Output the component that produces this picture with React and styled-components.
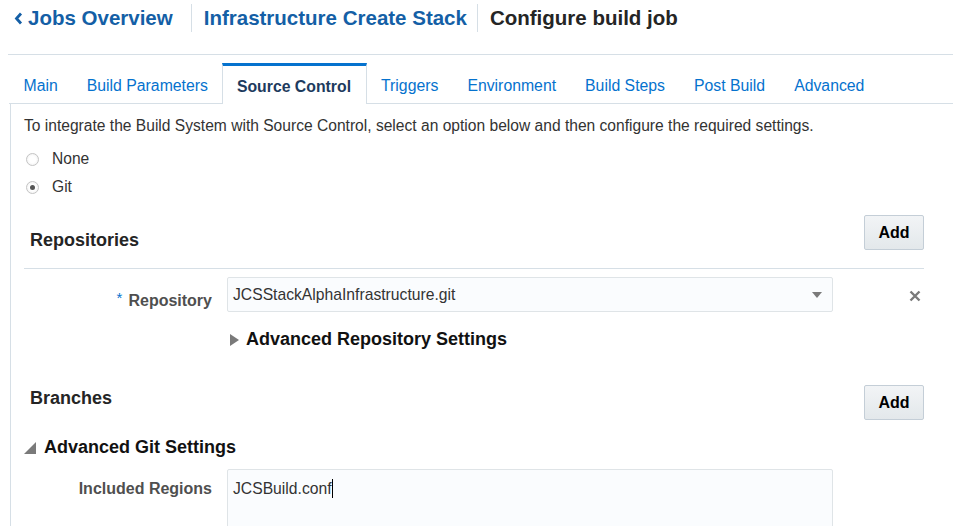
import React from 'react';
import styled, { createGlobalStyle } from 'styled-components';

const GlobalStyle = createGlobalStyle`
  html, body {
    margin: 0;
    padding: 0;
    background: #ffffff;
    font-family: "Liberation Sans", Arial, sans-serif;
    overflow: hidden;
  }
`;

const Page = styled.div`
  width: 953px;
  height: 526px;
  overflow: hidden;
`;

const Header = styled.header`
  margin-left: 8px;
  height: 36px;
  padding: 0 0 18px 6px;
  border-bottom: 1px solid #d6dfe6;
  display: flex;
  align-items: center;
`;

const Crumb = styled.a`
  display: flex;
  align-items: center;
  gap: 5px;
  font-size: 20.5px;
  font-weight: bold;
  color: ${p => (p.current ? '#252525' : '#145fa6')};
  text-decoration: none;
  height: 28px;
  padding: 0 ${p => (p.first ? '18px' : '10px')} 0 ${p => (p.first ? '0' : '12px')};
  border-left: ${p => (p.first ? 'none' : '1px solid #d6dfe6')};
`;

const TabBar = styled.nav`
  margin: 8px 0 0 9px;
  height: 40px;
  display: flex;
  border-bottom: 1px solid #d6dfe6;
`;

const Tab = styled.a`
  display: flex;
  align-items: center;
  padding: ${p => (p.active ? '3px 14.5px 0 13.5px' : '6px 14.5px 0')};
  font-size: 15.8px;
  color: ${p => (p.active ? '#1d3b5e' : '#0572ce')};
  font-weight: ${p => (p.active ? 'bold' : 'normal')};
  background: #ffffff;
  border-top: ${p => (p.active ? '3px solid #0572ce' : 'none')};
  border-left: ${p => (p.active ? '1px solid #d6dfe6' : 'none')};
  border-right: ${p => (p.active ? '1px solid #d6dfe6' : 'none')};
  margin-bottom: ${p => (p.active ? '-1px' : '0')};
  text-decoration: none;
`;

const Panel = styled.main`
  margin-left: 10px;
  border-left: 1px solid #d6dfe6;
  padding: 12px 29px 0 13px;
  height: 420px;
`;

const Intro = styled.p`
  margin: 0;
  font-size: 15.6px;
  line-height: 20px;
  color: #333333;
`;

const RadioList = styled.div`
  display: flex;
  flex-direction: column;
  margin-top: 9px;
`;

const RadioRow = styled.label`
  display: flex;
  align-items: center;
  height: 28px;
  font-size: 15.6px;
  color: #333333;
`;

const RadioCircle = styled.span`
  width: 11px;
  height: 11px;
  margin: 0 13px 0 2px;
  border-radius: 50%;
  border: 1px solid #c4c4c4;
  background: radial-gradient(circle, #ffffff 40%, #ececec 100%);
  display: flex;
  align-items: center;
  justify-content: center;
  &::after {
    content: '';
    width: 5px;
    height: 5px;
    border-radius: 50%;
    background: ${p => (p.checked ? '#555555' : 'transparent')};
  }
`;

const SectionHead = styled.div`
  display: flex;
  align-items: flex-start;
  justify-content: space-between;
  margin-top: ${p => p.top}px;
  padding-bottom: ${p => p.pad}px;
  border-bottom: ${p => (p.divider ? '1px solid #d6dfe6' : 'none')};
`;

const SectionTitle = styled.h2`
  margin: ${p => p.offset}px 0 0 6px;
  font-size: 18px;
  font-weight: bold;
  color: #252525;
  line-height: 20px;
`;

const AddButton = styled.button`
  width: 60px;
  height: 35px;
  border: 1px solid #c4ced7;
  border-radius: 2px;
  background: linear-gradient(#f2f4f6, #e3e8eb);
  font-family: "Liberation Sans", Arial, sans-serif;
  font-size: 16px;
  font-weight: bold;
  color: #000000;
  padding: 0;
`;

const FormRow = styled.div`
  display: flex;
  align-items: flex-start;
  margin-top: ${p => p.mt}px;
`;

const Label = styled.label`
  width: 203px;
  padding-right: 15px;
  box-sizing: border-box;
  text-align: right;
  font-size: 16px;
  line-height: 20px;
  font-weight: bold;
  color: #4f4f4f;
  padding-top: ${p => p.offset}px;
`;

const Required = styled.span`
  color: #0572ce;
  font-size: 15px;
  vertical-align: top;
  position: relative;
  top: -3px;
  margin-right: 6px;
  font-weight: normal;
`;

const Field = styled.div`
  width: 606px;
  height: ${p => p.h}px;
  box-sizing: border-box;
  border: 1px solid #dfe4e7;
  border-radius: 2px;
  background: #fafcfe;
  display: flex;
  align-items: ${p => (p.multi ? 'flex-start' : 'center')};
  justify-content: space-between;
  padding: ${p => (p.multi ? '10px 10px 0 5px' : '0 10px 0 5px')};
  font-size: 15.7px;
  color: #333333;
`;

const Caret = styled.span`
  display: inline-block;
  width: 1px;
  height: 19px;
  background: #000;
  vertical-align: middle;
  margin-top: -3px;
`;

const Remove = styled.button`
  margin: 13px 3px 0 auto;
  border: none;
  background: none;
  padding: 0;
  display: flex;
`;

const Disclosure = styled.div`
  display: flex;
  align-items: center;
  gap: ${p => p.gap}px;
  margin: ${p => p.margin};
  font-size: 18px;
  font-weight: bold;
  color: #111111;
`;

const ChevronLeft = () => (
  <svg width="9" height="13" viewBox="0 0 9 13">
    <polyline points="7,1.5 2.5,6.5 7,11.5" fill="none" stroke="#145fa6" strokeWidth="2.8" />
  </svg>
);

const TriangleRight = () => (
  <svg width="9" height="12" viewBox="0 0 9 12">
    <polygon points="0,0 9,6 0,12" fill="#7a7a7a" />
  </svg>
);

const TriangleOpen = () => (
  <svg width="12" height="12" viewBox="0 0 12 12">
    <polygon points="12,0 12,12 0,12" fill="#7a7a7a" />
  </svg>
);

const DownArrow = () => (
  <svg width="10" height="6" viewBox="0 0 10 6">
    <polygon points="0,0 10,0 5,6" fill="#7a7a7a" />
  </svg>
);

const CloseIcon = () => (
  <svg width="12" height="12" viewBox="0 0 12 12">
    <path d="M1.5 1.5 L10.5 10.5 M10.5 1.5 L1.5 10.5" stroke="#7a7a7a" strokeWidth="2.4" />
  </svg>
);

const tabs = ['Main', 'Build Parameters', 'Source Control', 'Triggers', 'Environment', 'Build Steps', 'Post Build', 'Advanced'];

function App() {
  return (
    <Page>
      <GlobalStyle />
      <Header>
        <Crumb first><ChevronLeft />Jobs Overview</Crumb>
        <Crumb>Infrastructure Create Stack</Crumb>
        <Crumb current>Configure build job</Crumb>
      </Header>

      <TabBar>
        {tabs.map(t => (
          <Tab key={t} active={t === 'Source Control'}>{t}</Tab>
        ))}
      </TabBar>

      <Panel>
        <Intro>
          To integrate the Build System with Source Control, select an option below and then configure the required settings.
        </Intro>
        <RadioList>
          <RadioRow><RadioCircle />None</RadioRow>
          <RadioRow><RadioCircle checked />Git</RadioRow>
        </RadioList>

        <SectionHead top={14} pad={18} divider>
          <SectionTitle offset={15}>Repositories</SectionTitle>
          <AddButton>Add</AddButton>
        </SectionHead>

        <FormRow mt={8}>
          <Label offset={14}><Required>*</Required>Repository</Label>
          <Field h={35}>
            <span>JCSStackAlphaInfrastructure.git</span>
            <DownArrow />
          </Field>
          <Remove><CloseIcon /></Remove>
        </FormRow>

        <Disclosure gap={7} margin="17px 0 0 206px">
          <TriangleRight />Advanced Repository Settings
        </Disclosure>

        <SectionHead top={35} pad={0}>
          <SectionTitle offset={3}>Branches</SectionTitle>
          <AddButton>Add</AddButton>
        </SectionHead>

        <Disclosure gap={8} margin="17px 0 0 0">
          <TriangleOpen />Advanced Git Settings
        </Disclosure>

        <FormRow mt={11}>
          <Label offset={10}>Included Regions</Label>
          <Field h={70} multi>
            <span>JCSBuild.conf<Caret /></span>
          </Field>
        </FormRow>
      </Panel>
    </Page>
  );
}

export default App;
